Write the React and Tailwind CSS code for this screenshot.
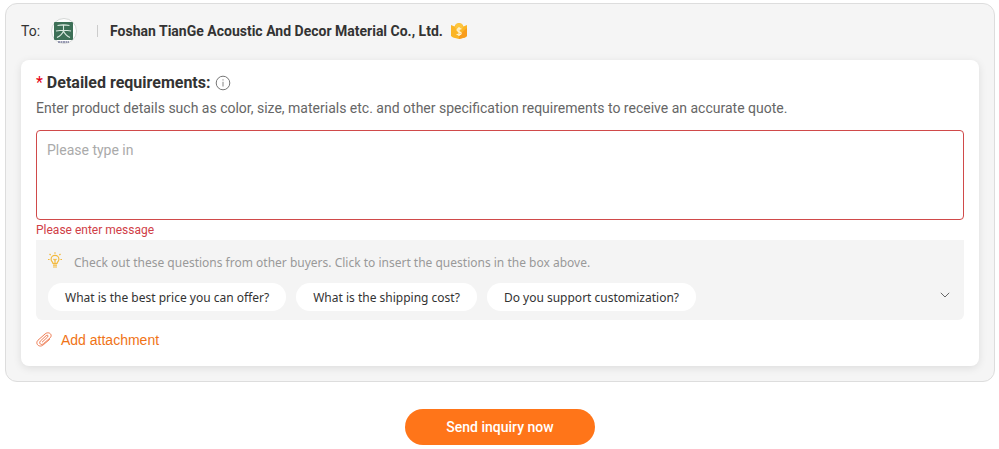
import React from "react";

const questions = [
  "What is the best price you can offer?",
  "What is the shipping cost?",
  "Do you support customization?",
];

function CompanyLogo() {
  return (
    <svg className="h-[26px] w-[26px]" viewBox="0 0 26 26" aria-hidden="true">
      <circle cx="13" cy="13" r="12.5" fill="#fff" stroke="#d4d7d5" />
      <rect x="3" y="4" width="19" height="18" rx="1" fill="#3d7057" />
      <path
        d="M6.500 7.500q6-1.200 12 0M5 13q8-1.500 15 0M12.500 7v6M12.500 13q-1.500 4-6.500 6.500M12.500 13q1.500 4 6.500 6.500"
        fill="none"
        stroke="#d9e8df"
        strokeWidth="1.100"
      />
      <path d="M7 24h11" stroke="#77799a" strokeWidth="1.500" strokeDasharray="2 .5" />
    </svg>
  );
}

function AssuranceBadge() {
  return (
    <svg className="h-4 w-4" viewBox="0 0 16 16" aria-hidden="true">
      <path d="M0 2 3.500 3.500 5 1l3-1 3 1 1.500 2.500L16 2v11l-2 1.500L8 16l-6-1.500L0 13z" fill="#fbb526" />
      <path d="M5 1l3-1 3 1 1 4-4 2-4-2z" fill="#fdc63e" />
      <path d="M16 5v8l-2 1.500L8 16v-4z" fill="#f99d1c" />
      <path
        d="M10.300 6.300C9.800 5.400 6 5 6 7.100s4.200 1.200 4.200 3.200-3.800 1.900-4.500.7M8 4v9"
        fill="none"
        stroke="#fff5d6"
        strokeWidth="1.200"
      />
    </svg>
  );
}

function InfoIcon() {
  return (
    <svg className="h-4 w-4" viewBox="0 0 16 16" fill="none" stroke="#666" aria-hidden="true">
      <circle cx="8" cy="8" r="6.800" strokeWidth=".9" />
      <path d="M8 6.800v4.700M8 4.300v1.200" strokeWidth=".8" />
    </svg>
  );
}

function BulbIcon() {
  return (
    <svg
      className="h-4 w-4"
      viewBox="0 0 16 16"
      fill="none"
      stroke="#f3b93c"
      strokeWidth="1.200"
      aria-hidden="true"
    >
      <path d="M5 11.500c0-1.300-1.900-2-1.900-4.300a3.900 3.900 0 0 1 7.800 0c0 2.300-1.900 3-1.900 4.300zM5 13.200h4M5 15h4M7 11.500V8M5.500 7 7 8.300 8.500 7" />
      <path d="M7 .3v1.400M1.500 2l1.200 1.200M12.500 2l-1.200 1.200M0 7.500h1.600M12.400 7.500H14" />
    </svg>
  );
}

function PaperclipIcon() {
  return (
    <svg
      className="h-4 w-4"
      viewBox="0 0 16 16"
      fill="none"
      stroke="#ee7a50"
      strokeLinecap="round"
      aria-hidden="true"
    >
      <path d="M13.500 7.500 7.200 12.900c-3.700 3.200-8.500-1-5.300-4.600L9 2c3.500-3 8 .3 5.300 3.700l-6.800 6c-2.300 2-5-.3-3.200-2.600l5.900-5.500c1.200-1.100 2.500.1 1.500 1.300L6.300 10" />
    </svg>
  );
}

function ChevronIcon() {
  return (
    <svg className="h-3 w-3" viewBox="0 0 12 12" fill="none" stroke="#666" aria-hidden="true">
      <path d="m1.800 1.800 4.200 4.200 4.200-4.200" />
    </svg>
  );
}

function QuestionSuggestions() {
  return (
    <section className="rounded-b-md bg-[#f4f4f4] px-3 pt-3 pb-2 font-['Noto_Sans','Open_Sans',sans-serif] text-xs leading-[22px]">
      <div className="flex gap-2.5 text-[#999]">
        <BulbIcon />
        <p>Check out these questions from other buyers. Click to insert the questions in the box above.</p>
      </div>
      <div className="mt-[9px] mb-px flex items-center justify-between">
        <div className="flex flex-wrap gap-2.5">
          {questions.map((question) => (
            <button key={question} type="button" className="h-7 rounded-full bg-white px-[17px] pt-px text-[#333]">
              {question}
            </button>
          ))}
        </div>
        <button type="button" aria-label="Show more questions" className="mr-px">
          <ChevronIcon />
        </button>
      </div>
    </section>
  );
}

export default function App() {
  return (
    <form className="pt-[3px] pr-1 pb-1 pl-[5px] font-[Roboto,sans-serif] text-sm text-[#333]">
      <div className="rounded-xl border border-[#ddd] bg-[#f5f5f5] p-[15px]">
        <header className="flex h-6 items-center">
          <span>To:</span>
          <span className="ml-[11px]">
            <CompanyLogo />
          </span>
          <span className="mr-3 ml-5 h-3 w-px bg-[#ccc]" />
          <strong className="font-bold">Foshan TianGe Acoustic And Decor Material Co., Ltd.</strong>
          <span className="ml-2">
            <AssuranceBadge />
          </span>
        </header>

        <div className="mt-[17px] rounded-lg bg-white px-[15px] pt-[11px] pb-4 shadow-[0_2px_8px_rgba(0,0,0,0.1)]">
          <div className="flex items-center gap-1 leading-6">
            <label htmlFor="requirements" className="text-base leading-6 font-bold">
              <span className="font-normal text-[#e60012]">*</span> Detailed requirements:
            </label>
            <InfoIcon />
          </div>
          <p id="requirements-hint" className="mt-[3px] leading-5 text-[#666]">
            Enter product details such as color, size, materials etc. and other specification requirements to
            receive an accurate quote.
          </p>
          <textarea
            id="requirements"
            placeholder="Please type in"
            aria-invalid="true"
            aria-describedby="requirements-hint requirements-error"
            className="mt-3 block h-[90px] w-full resize-none rounded-sm border border-[#d04a4a] px-2.5 py-[9px] leading-5 outline-none placeholder:text-[#aaa]"
          />
          <p id="requirements-error" className="text-xs leading-5 text-[#d04047]">
            Please enter message
          </p>
          <QuestionSuggestions />
          <button
            type="button"
            className="mt-2.5 flex items-center gap-[9px] font-['Liberation_Sans',Arial,sans-serif] leading-5 text-[#f07316]"
          >
            <PaperclipIcon />
            Add attachment
          </button>
        </div>
      </div>

      <div className="mt-[27px] flex justify-center">
        <button type="submit" className="h-9 w-[190px] rounded-full bg-[#ff7519] font-medium text-white">
          Send inquiry now
        </button>
      </div>
    </form>
  );
}
